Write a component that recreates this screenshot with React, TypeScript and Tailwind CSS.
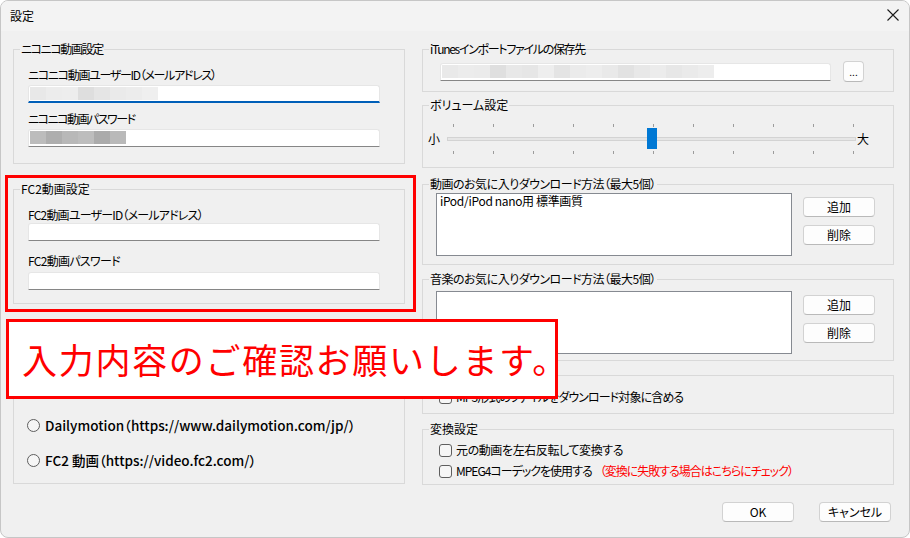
import React from "react";

function Group({
  label,
  labelClass = "",
  className = "",
  body = "",
  children,
}: {
  label?: string;
  labelClass?: string;
  className?: string;
  body?: string;
  children: React.ReactNode;
}) {
  return (
    <div className={`flex flex-col border border-[#d9d9d9] ${className}`}>
      <div className={`-mt-[9px] ml-[6px] h-[16px] self-start whitespace-nowrap bg-[#f0f0f0] px-[1px] leading-[16px] ${labelClass}`}>
        {label}
      </div>
      <div className={body}>{children}</div>
    </div>
  );
}

function TextBox({
  width,
  blocks = [],
  focused = false,
  className = "",
}: {
  width: string;
  blocks?: string[];
  focused?: boolean;
  className?: string;
}) {
  return (
    <div
      className={`flex h-[18px] shrink-0 items-start rounded-t-[3px] border border-[#e6e6e6] bg-white pl-[1px] pt-[1px] ${
        focused ? "border-b-2 border-b-[#005fb8]" : "border-b-[#868686]"
      } ${width} ${className}`}
    >
      {blocks.map((c, i) => (
        <span key={i} className={`h-[13px] w-[16px] ${c}`} />
      ))}
    </div>
  );
}

function Btn({ children, className = "w-[72px] h-[20px]" }: { children: React.ReactNode; className?: string }) {
  return (
    <button
      className={`flex shrink-0 items-center justify-center rounded-[4px] border border-[#d2d2d2] border-b-[#b9b9b9] bg-[#fdfdfd] leading-[16px] ${className}`}
    >
      {children}
    </button>
  );
}

function Check({
  children,
  className = "",
  textClass = "",
}: {
  children: React.ReactNode;
  className?: string;
  textClass?: string;
}) {
  return (
    <div className={`flex h-[16px] items-center ${className}`}>
      <span className="h-[13px] w-[13px] shrink-0 rounded-[3px] border border-[#5e5e5e] bg-[#f6f6f6]" />
      <span className={`ml-[4px] whitespace-nowrap leading-[16px] ${textClass}`}>{children}</span>
    </div>
  );
}

function Radio({ children, className = "" }: { children?: React.ReactNode; className?: string }) {
  return (
    <div className={`flex h-[16px] items-center ${className}`}>
      <span className="h-[13px] w-[13px] shrink-0 rounded-full border border-[#5e5e5e] bg-[#f6f6f6]" />
      <span className="ml-[5px] whitespace-nowrap text-[13.5px] font-medium leading-[16px]">{children}</span>
    </div>
  );
}

const NICO_ID = [
  "bg-[#e8e8e8]",
  "bg-[#ececec]",
  "bg-[#ededed]",
  "bg-[#dedede]",
  "bg-[#e5e5e5]",
  "bg-[#eaeaea]",
  "bg-[#ececec]",
  "bg-[#efefef]",
];
const NICO_PW = ["bg-[#bcbcbc]", "bg-[#aeaeae]", "bg-[#b8b8b8]", "bg-[#bdbdbd]", "bg-[#ababab]", "bg-[#b9b9b9]"];
const ITUNES = [
  "bg-[#e9e9e9]",
  "bg-[#ececec]",
  "bg-[#ebebeb]",
  "bg-[#dfdfdf]",
  "bg-[#e8e8e8]",
  "bg-[#e6e6e6]",
  "bg-[#eeeeee]",
  "bg-[#e4e4e4]",
  "bg-[#ebebeb]",
  "bg-[#ededed]",
  "bg-[#e9e9e9]",
  "bg-[#e2e2e2]",
  "bg-[#e8e8e8]",
  "bg-[#ececec]",
  "bg-[#e7e7e7]",
  "bg-[#eaeaea]",
  "bg-[#ededed]",
];

const TICKS = Array.from({ length: 11 });

export default function App() {
  return (
    <div className="relative h-[538px] w-[910px] overflow-hidden bg-white font-['Noto_Sans_CJK_JP','Noto_Sans',sans-serif] text-[12px] text-black [font-feature-settings:'palt']">
      <div className="flex h-full flex-col overflow-hidden rounded-[8px] border border-[#c6c6c6] bg-[#f0f0f0]">
        {/* title bar */}
        <div className="flex h-[30px] shrink-0 items-center justify-between bg-[#f3f3f3] pl-[9px] pr-[10px]">
          <span className="leading-[16px]">設定</span>
          <svg width="12" height="12" viewBox="0 0 12 12" className="mb-[3px]" fill="none" stroke="#1b1b1b" strokeWidth="1.1">
            <path d="M0.5 0.5L11.5 11.5M11.5 0.5L0.5 11.5" />
          </svg>
        </div>

        <div className="flex gap-[17px] pl-[12px] pt-[18px]">
          {/* left column */}
          <div className="flex w-[392px] shrink-0 flex-col">
            <Group label="ニコニコ動画設定" labelClass="tracking-[-1.4px]" body="flex flex-col pl-[14px] pb-[16px]">
              <div className="mt-[10px] leading-[16px] tracking-[-1.3px]">ニコニコ動画ユーザーID（メールアドレス）</div>
              <TextBox width="w-[352px]" className="mt-[2px]" focused blocks={NICO_ID} />
              <div className="mt-[8px] leading-[16px] tracking-[-1.5px]">ニコニコ動画パスワード</div>
              <TextBox width="w-[352px]" className="mt-[2px]" blocks={NICO_PW} />
            </Group>

            <Group label="FC2動画設定" className="mt-[25px]" body="flex flex-col pl-[14px] pb-[13px]">
              <div className="mt-[10px] leading-[16px] tracking-[-0.8px]">FC2動画ユーザーID（メールアドレス）</div>
              <TextBox width="w-[352px]" />
              <div className="mt-[12px] leading-[16px] tracking-[-0.7px]">FC2動画パスワード</div>
              <TextBox width="w-[352px]" className="mt-[3px]" />
            </Group>

            {/* caption and first rows of this group sit under the callout */}
            <Group className="mt-[22px]" body="flex flex-col pl-[13px] pb-[15px]">
              <Radio className="mt-[13px]" />
              <Radio className="mt-[19px]" />
              <Radio className="mt-[19px]">Dailymotion（https://www.dailymotion.com/jp/）</Radio>
              <Radio className="mt-[19px]">FC2 動画（https://video.fc2.com/）</Radio>
            </Group>
          </div>

          {/* right column */}
          <div className="flex w-[472px] shrink-0 flex-col">
            <Group
              label="iTunesインポートファイルの保存先"
              labelClass="tracking-[-1.3px]"
              body="mt-[4px] flex items-center pl-[17px] pb-[9px]"
            >
              <TextBox width="w-[391px]" blocks={ITUNES} />
              <Btn className="ml-[12px] h-[21px] w-[21px] text-[10px]">...</Btn>
            </Group>

            <Group label="ボリューム設定" className="mt-[13px]" body="mt-[10px] flex items-center pl-[5px] pb-[13px]">
              <span className="w-[12px] leading-[16px]">小</span>
              <div className="relative ml-[7px] flex w-[409px] flex-col">
                <div className="mt-[1px] flex h-[3px] justify-between pl-[6px] pr-[2px]">
                  {TICKS.map((_, i) => (
                    <span key={i} className="h-[3px] w-[1px] bg-[#9c9c9c]" />
                  ))}
                </div>
                <div className="mt-[10px] h-[4px] border border-[#d3d3d3] bg-[#e6e6e6]" />
                <div className="mt-[10px] flex h-[3px] justify-between pl-[6px] pr-[2px]">
                  {TICKS.map((_, i) => (
                    <span key={i} className="h-[3px] w-[1px] bg-[#9c9c9c]" />
                  ))}
                </div>
                <span className="absolute left-[200px] top-[5px] h-[21px] w-[10px] bg-[#0078d4]" />
              </div>
              <span className="ml-[1px] leading-[16px]">大</span>
            </Group>

            <Group
              label="動画のお気に入りダウンロード方法（最大5個）"
              labelClass="tracking-[-0.5px]"
              className="mt-[16px]"
              body="mt-[1px] flex pl-[13px] pb-[8px]"
            >
              <div className="h-[63px] w-[356px] border border-[#868a91] bg-white pl-[3px] leading-[14px] tracking-[-0.35px]">
                iPod/iPod nano用 標準画質
              </div>
              <div className="ml-[11px] mt-[4px] flex flex-col gap-[8px]">
                <Btn>追加</Btn>
                <Btn>削除</Btn>
              </div>
            </Group>

            <Group
              label="音楽のお気に入りダウンロード方法（最大5個）"
              labelClass="tracking-[-0.5px]"
              className="mt-[14px]"
              body="mt-[4px] flex pl-[13px] pb-[6px]"
            >
              <div className="h-[63px] w-[356px] border border-[#868a91] bg-white" />
              <div className="ml-[11px] mt-[4px] flex flex-col gap-[8px]">
                <Btn>追加</Btn>
                <Btn>削除</Btn>
              </div>
            </Group>

            <Group className="mt-[14px]" body="mt-[6px] flex flex-col pl-[16px] pb-[8px]">
              <Check textClass="tracking-[-0.9px]">MP3形式のファイルをダウンロード対象に含める</Check>
            </Group>

            <Group label="変換設定" className="mt-[15px]" body="mt-[5px] flex flex-col pl-[16px] pb-[5px]">
              <Check textClass="tracking-[-0.4px]">元の動画を左右反転して変換する</Check>
              <Check className="mt-[5px]" textClass="tracking-[-1px]">
                MPEG4コーデックを使用する
                <span className="ml-[8px] tracking-[-1px] text-[#ff0000]">（変換に失敗する場合はこちらにチェック）</span>
              </Check>
            </Group>

            <div className="mt-[17px] flex justify-end gap-[25px] pr-[3px]">
              <Btn>OK</Btn>
              <Btn>キャンセル</Btn>
            </div>
          </div>
        </div>
      </div>

      {/* annotations */}
      <div className="absolute left-[5px] top-[175px] h-[137px] w-[411px] border-[3px] border-[#ff0000]" />
      <div className="absolute left-[6px] top-[319px] flex h-[80px] w-[552px] items-center whitespace-nowrap border-[3px] border-[#ff0000] bg-white pl-[13px] text-[35px] leading-[40px] tracking-[1.7px] text-[#ff0000] [font-feature-settings:normal]">
        入力内容のご確認お願いします。
      </div>
    </div>
  );
}
